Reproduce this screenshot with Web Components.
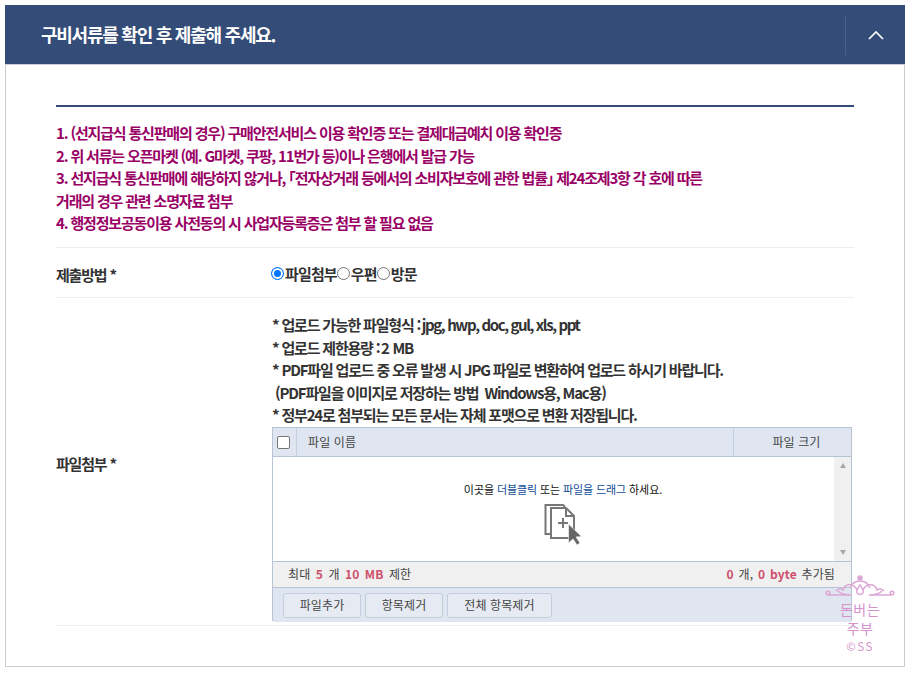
<!DOCTYPE html>
<html lang="ko"><head><meta charset="utf-8"><title>구비서류</title>
<style>
html,body{margin:0;padding:0;background:#fff}
body{font-family:"Noto Sans CJK KR","Noto Sans",sans-serif;width:912px;height:674px;overflow:hidden;position:relative}
.t{letter-spacing:-1.4px}
.u{letter-spacing:-1.9px}
.m{letter-spacing:-1.3px;word-spacing:1px}
</style></head><body>
<doc-panel title-text="구비서류를 확인 후 제출해 주세요.">
  <notice-list>
    <div>1. (선지급식 통신판매의 경우) 구매안전서비스 이용 확인증 또는 결제대금예치 이용 확인증</div>
    <div>2. 위 서류는 오픈마켓 (예. G마켓, 쿠팡, 11번가 등)이나 은행에서 발급 가능</div>
    <div>3. 선지급식 통신판매에 해당하지 않거나, <span style="font-feature-settings:'halt'">「</span>전자상거래 등에서의 소비자보호에 관한 법률<span style="font-feature-settings:'halt'">」</span> 제24조제3항 각 호에 따른</div>
    <div>거래의 경우 관련 소명자료 첨부</div>
    <div>4. 행정정보공동이용 사전동의 시 사업자등록증은 첨부 할 필요 없음</div>
  </notice-list>
  <form-row label="제출방법 *" style="--row-pad:15px 0 12px;--label-shift:1px"><method-radios></method-radios></form-row>
  <form-row label="파일첨부 *" style="--row-pad:16px 0 4px;--label-shift:-3px">
    <upload-help>
      <div>* 업로드 가능한 파일형식 <span class="u">: </span><span class="t">jpg, hwp, doc, gul, xls, ppt</span></div>
      <div>* 업로드 제한용량 <span class="u">: </span><span class="m">2 MB</span></div>
      <div>* PDF파일 업로드 중 오류 발생 시 JPG 파일로 변환하여 업로드 하시기 바랍니다.</div>
      <div>&nbsp;(PDF파일을 이미지로 저장하는 방법 &nbsp;Windows용, Mac용)</div>
      <div>* 정부24로 첨부되는 모든 문서는 자체 포맷으로 변환 저장됩니다.</div>
    </upload-help>
    <file-uploader></file-uploader>
  </form-row>
</doc-panel>
<brand-mark></brand-mark>
<script>
function def(name, css, html, init){
  customElements.define(name, class extends HTMLElement{
    constructor(){super();const r=this.attachShadow({mode:'open'});r.innerHTML='<style>'+css+'</style>'+html;}
    connectedCallback(){init&&init.call(this,this.shadowRoot);}
  });
}
const KR='"Noto Sans CJK KR","Noto Sans",sans-serif';
def('doc-panel',`
:host{display:block;box-sizing:border-box;width:900px;height:662px;margin:5px 0 0 5px;border:1px solid #ccc;border-top:0;background:#fff;position:relative}
header{display:flex;align-items:center;height:60px;margin:0 -1px;background:#344d78;color:#fff;box-sizing:border-box;border-bottom:1px solid #ccd}
h2{flex:1;margin:0;padding-left:36px;font:700 18px/1 ${KR};letter-spacing:-1.25px;position:relative;top:-1px}
.tog{width:59px;height:40px;border-left:1px solid #4a628b;display:flex;align-items:center;justify-content:center}
main{margin:0 50px;padding-top:40px}
.rule{height:2px;background:#344d78}
`,`<header><h2></h2><div class="tog"><svg width="16" height="10" viewBox="0 0 16 10"><path d="M1 9 8 2l7 7" fill="none" stroke="#fff" stroke-width="1.700"/></svg></div></header><main><div class="rule"></div><slot></slot></main>`,
function(r){r.querySelector('h2').textContent=this.getAttribute('title-text');});
def('notice-list',`
:host{display:block;padding:15px 0 12px;border-bottom:1px solid #eee;color:#990066;font:700 15px/22.500px ${KR};letter-spacing:-1.17px}
`,`<slot></slot>`);
def('form-row',`
:host{display:flex;align-items:center;border-bottom:1px solid #eee;padding:var(--row-pad,15px 0);color:#333;font:700 15px/22.500px ${KR};letter-spacing:-1.19px}
.l{width:216px;flex:none;transform:translateY(var(--label-shift,0))}
.v{flex:1;min-width:0}
`,`<div class="l"></div><div class="v"><slot></slot></div>`,
function(r){r.querySelector('.l').textContent=this.getAttribute('label');});
def('method-radios',`
:host{display:flex;align-items:center;height:22px;color:#333;margin-left:-1px;letter-spacing:-.85px;font-weight:700}
label{display:flex;align-items:center}
i{display:block;box-sizing:border-box;width:13px;height:13px;border-radius:50%;border:1px solid #767676;background:#fff;margin-right:1px}
i.on{border:1px solid #0075ff;background:#0075ff;box-shadow:inset 0 0 0 2px #fff}
`,`<label><i class="on"></i>파일첨부</label><label><i></i>우편</label><label><i></i>방문</label>`);
def('upload-help',`
:host{display:block;color:#333}
`,`<slot></slot>`);
def('file-uploader',`
:host{display:block;box-sizing:border-box;width:580px;height:194px;border:1px solid #b8c3d6;background:#fff;font:400 12px/1 ${KR};letter-spacing:.1px;color:#444}
.head{display:flex;height:28px;background:#dfe6f1;border-bottom:1px solid #b8c3d6;align-items:stretch}
.c{width:24px;border-right:1px solid #c6cfdf;display:flex;align-items:center;justify-content:center;padding-right:2px;box-sizing:border-box}
.cb{box-sizing:border-box;width:13px;height:13px;border:1px solid #767676;border-radius:2px;background:#fff;margin-top:2px}
.n{flex:1;padding-left:11px;display:flex;align-items:center}
.s{width:118px;border-left:1px solid #c6cfdf;display:flex;align-items:center;justify-content:center;padding-left:8px;box-sizing:border-box}
.body{height:104px;display:flex;border-bottom:1px solid #b8c3d6}
.drop{flex:1;display:flex;flex-direction:column;align-items:center;padding:27px 0 0 19px;box-sizing:border-box;color:#111;font-size:11px;letter-spacing:-.1px}
.drop b{font-weight:400;color:#0f4c96}
.drop svg{margin-top:9px}
.bar{width:17px;background:#f0f0f0;display:flex;flex-direction:column;justify-content:space-between;align-items:center;padding:6px 0;box-sizing:border-box}
.tri{width:0;height:0;border:3.500px solid transparent}
.up{border-bottom:5px solid #a8a8a8;border-top:0}
.dn{border-top:5px solid #a8a8a8;border-bottom:0}
.info{height:25px;background:#f0f0f0;border-bottom:1px solid #b8c3d6;display:flex;justify-content:space-between;align-items:center;padding:0 16px 0 15px;word-spacing:2px}
.info span+span{word-spacing:1.400px}
.info b{color:#ce4f6c;font-weight:700}
.btns{height:34px;background:#dfe6f1;display:flex;gap:4px;padding:5px 0 0 10px;box-sizing:border-box;align-items:flex-start}
.btn{height:25px;box-sizing:border-box;border:1px solid #c2cddd;border-radius:3px;background:#e6ebf3;display:flex;align-items:center;justify-content:center;color:#444}
`,`<div class="head"><div class="c"><div class="cb"></div></div><div class="n">파일 이름</div><div class="s">파일 크기</div></div>
<div class="body"><div class="drop"><div>이곳을 <b>더블클릭</b> 또는 <b>파일을 드래그</b> 하세요.</div>
<svg width="38" height="41" viewBox="0 0 38 41"><path d="M6 1h13l2 2M6 1H1.500v29H6" fill="none" stroke="#777" stroke-width="2"/><path d="M7 4h15l8 8v22H7z" fill="#fff" stroke="#777" stroke-width="2"/><path d="M22 4v8h8" fill="none" stroke="#777" stroke-width="2"/><path d="M14 19h10M19 14v10" stroke="#777" stroke-width="2"/><path d="M24.500 20v19l4.500-4 4 6 3-2-4-6 5.500-.5z" fill="#666" stroke="#fff" stroke-width=".6"/></svg></div>
<div class="bar"><span class="tri up"></span><span class="tri dn"></span></div></div>
<div class="info"><span>최대 <b>5</b> 개 <b>10 MB</b> 제한</span><span><b>0</b> 개, <b>0 byte</b> 추가됨</span></div>
<div class="btns"><div class="btn" style="width:78px">파일추가</div><div class="btn" style="width:78px">항목제거</div><div class="btn" style="width:105px">전체 항목제거</div></div>`);
def('brand-mark',`
:host{position:absolute;left:821px;top:575px;width:78px;display:block;text-align:center;color:#d592cb;font:400 14px/19px ${KR};letter-spacing:.4px}
svg{display:block;margin:0 auto 3px}
small{display:block;font-size:11.500px;line-height:17px;letter-spacing:1.500px}
`,`<svg width="70" height="22" viewBox="0 0 70 22" fill="none" stroke="#dca6d5" stroke-width="1.500"><circle cx="35" cy="3" r="2" fill="#dca6d5"/><path d="M25 13c2-5 6-7 10-7s8 2 10 7M11 16c2-2 5-3 7-1 2-7 11-7 14 0M59 16c-2-2-5-3-7-1-2-7-11-7-14 0"/><path d="M35 10c-3 4-4 6-3 8 1 2 5 2 6 0 1-2 0-4-3-8z"/><path d="M4 20h22c-4 0-10-1-13-4M66 20H44c4 0 10-1 13-4"/><circle cx="3" cy="18" r="1.800"/><circle cx="67" cy="18" r="1.800"/></svg>돈버는<br>주부<small>©SS</small>`);
</script>
</body></html>
